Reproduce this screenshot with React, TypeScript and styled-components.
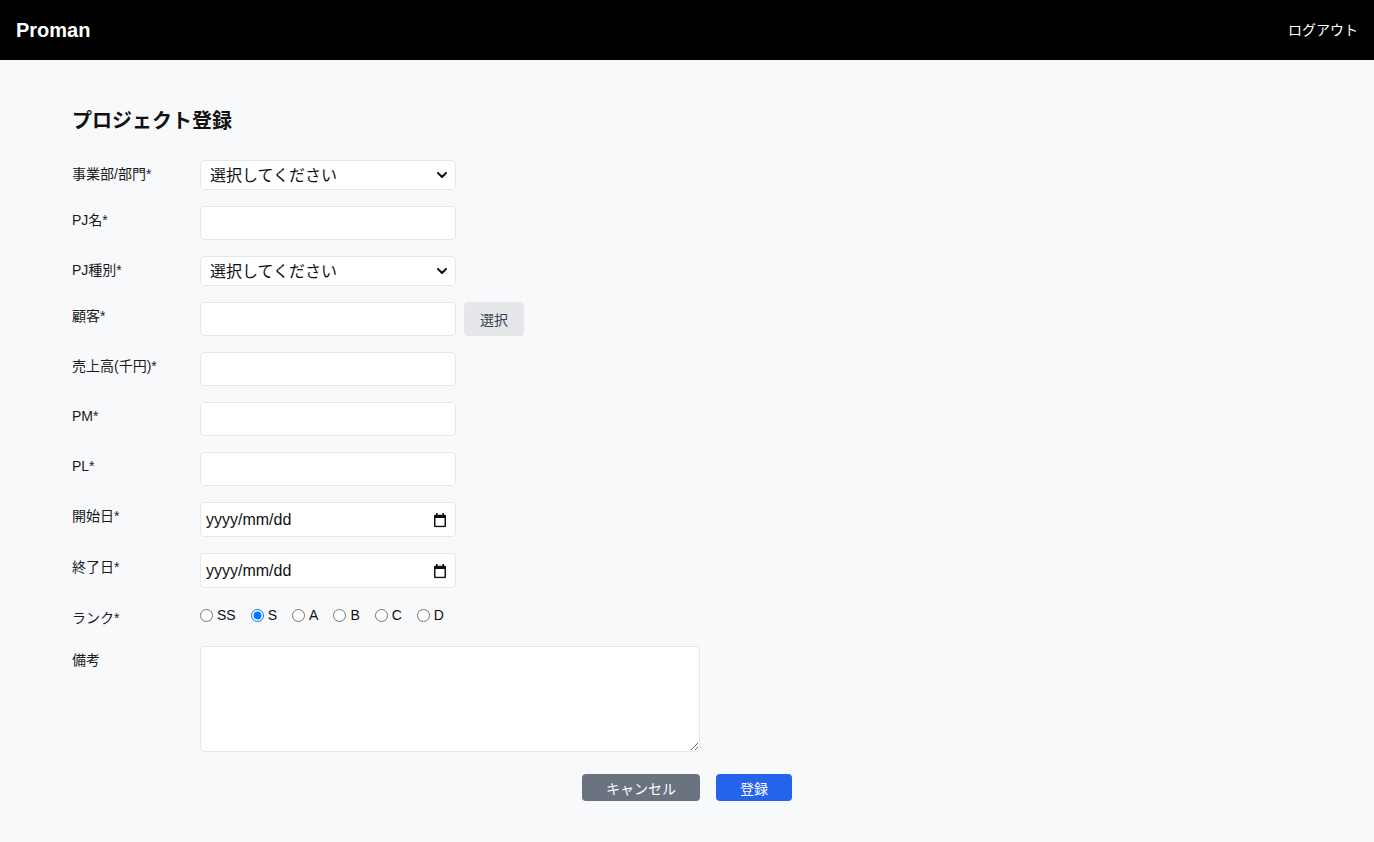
import React from 'react';
import styled, { createGlobalStyle } from 'styled-components';

const FONT = `"Liberation Sans", "Noto Sans CJK JP", sans-serif`;

const RANKS = ['SS', 'S', 'A', 'B', 'C', 'D'];

const GlobalStyle = createGlobalStyle`
  html, body {
    margin: 0;
    padding: 0;
    background: #f8f9fb;
    font-family: ${FONT};
    color: #111;
    overflow: hidden;
  }
  * {
    box-sizing: border-box;
  }
`;

const ChevronIcon = () => (
  <svg width="10" height="6" viewBox="0 0 10 6" fill="none">
    <path d="M1 1l4 4 4-4" stroke="#111" strokeWidth="2" strokeLinecap="round" strokeLinejoin="round" />
  </svg>
);

const CalendarIcon = () => (
  <svg width="14" height="15" viewBox="0 0 14 15" fill="none">
    <rect x="3" y="0.5" width="1.6" height="3" fill="#111" />
    <rect x="9.4" y="0.5" width="1.6" height="3" fill="#111" />
    <rect x="1" y="2.5" width="12" height="3" fill="#111" />
    <rect x="1.75" y="3" width="10.5" height="11" rx="0.5" stroke="#111" strokeWidth="1.5" />
  </svg>
);

const SelectField: React.FC = () => (
  <FieldWrap>
    <Select defaultValue="">
      <option value="">選択してください</option>
    </Select>
    <FieldIcon>
      <ChevronIcon />
    </FieldIcon>
  </FieldWrap>
);

const DateField: React.FC = () => (
  <FieldWrap>
    <DateInput type="text" placeholder="yyyy/mm/dd" />
    <FieldIcon>
      <CalendarIcon />
    </FieldIcon>
  </FieldWrap>
);

export default function App() {
  return (
    <Page>
      <GlobalStyle />
      <Header>
        <Brand>Proman</Brand>
        <Logout>ログアウト</Logout>
      </Header>

      <Main>
        <Title>プロジェクト登録</Title>

        <Row>
          <Label>事業部/部門*</Label>
          <SelectField />
        </Row>
        <Row>
          <Label>PJ名*</Label>
          <TextInput type="text" />
        </Row>
        <Row>
          <Label>PJ種別*</Label>
          <SelectField />
        </Row>
        <Row>
          <Label>顧客*</Label>
          <TextInput type="text" />
          <PickButton type="button">選択</PickButton>
        </Row>
        <Row>
          <Label>売上高(千円)*</Label>
          <TextInput type="text" />
        </Row>
        <Row>
          <Label>PM*</Label>
          <TextInput type="text" />
        </Row>
        <Row>
          <Label>PL*</Label>
          <TextInput type="text" />
        </Row>
        <Row>
          <Label>開始日*</Label>
          <DateField />
        </Row>
        <Row>
          <Label>終了日*</Label>
          <DateField />
        </Row>
        <Row>
          <Label>ランク*</Label>
          <RadioGroup>
            {RANKS.map(rank => (
              <RadioOption key={rank}>
                <Radio type="radio" name="rank" defaultChecked={rank === 'S'} />
                {rank}
              </RadioOption>
            ))}
          </RadioGroup>
        </Row>
        <Row>
          <Label>備考</Label>
          <TextArea />
        </Row>

        <Actions>
          <ActionButton type="button" $variant="cancel">キャンセル</ActionButton>
          <ActionButton type="button" $variant="primary">登録</ActionButton>
        </Actions>
      </Main>
    </Page>
  );
}

const Page = styled.div`
  height: 100vh;
  overflow-y: scroll;
  background: #f8f9fb;

  &::-webkit-scrollbar {
    width: 14px;
    background: #fafafa;
    border-left: 1px solid #e6e6e6;
  }
  &::-webkit-scrollbar-thumb {
    background: #c1c1c1;
    border-radius: 7px;
    border: 3px solid transparent;
    border-left-width: 4px;
    background-clip: padding-box;
  }
`;

const Header = styled.header`
  height: 60px;
  background: #000;
  color: #fff;
  display: flex;
  align-items: center;
  justify-content: space-between;
  padding: 0 16px;
`;

const Brand = styled.div`
  font-size: 20px;
  font-weight: bold;
  line-height: 24px;
`;

const Logout = styled.div`
  font-size: 14px;
  line-height: 20px;
  cursor: pointer;
`;

const Main = styled.main`
  padding: 48px 72px 222px;
`;

const Title = styled.h1`
  font-size: 20px;
  line-height: 26px;
  font-weight: bold;
  margin: 0 0 26px;
`;

const Row = styled.div`
  display: flex;
  align-items: flex-start;
  margin-bottom: 16px;
`;

const Label = styled.label`
  width: 128px;
  flex-shrink: 0;
  font-size: 14px;
  line-height: 20px;
  padding-top: 4px;
  color: #1a1a1a;
`;

const FieldWrap = styled.div`
  position: relative;
  width: 256px;
`;

const FieldIcon = styled.span`
  position: absolute;
  top: 50%;
  right: 9px;
  transform: translateY(-50%);
  display: flex;
  pointer-events: none;
`;

const Select = styled.select`
  appearance: none;
  width: 256px;
  height: 30px;
  padding: 0 30px 0 9px;
  border: 1px solid #e5e7eb;
  border-radius: 4px;
  background: #fff;
  font-family: ${FONT};
  font-size: 16px;
  color: #111;
  outline: none;
`;

const TextInput = styled.input`
  width: 256px;
  height: 34px;
  padding: 0 8px;
  border: 1px solid #e5e7eb;
  border-radius: 4px;
  background: #fff;
  font-family: ${FONT};
  font-size: 16px;
  outline: none;
`;

const DateInput = styled(TextInput)`
  height: 35px;
  padding: 0 30px 0 5px;

  &::placeholder {
    color: #111;
    opacity: 1;
  }
`;

const PickButton = styled.button`
  margin-left: 8px;
  height: 34px;
  padding: 0 16px;
  border: none;
  border-radius: 4px;
  background: #e5e7eb;
  color: #374151;
  font-family: ${FONT};
  font-size: 14px;
  cursor: pointer;
`;

const RadioGroup = styled.div`
  display: flex;
  align-items: center;
  height: 26px;
  padding-bottom: 4px;
`;

const RadioOption = styled.label`
  display: flex;
  align-items: center;
  margin-right: 15px;
  font-size: 14px;
  line-height: 20px;
`;

const Radio = styled.input`
  width: 13px;
  height: 13px;
  margin: 0 4px 0 0;
`;

const TextArea = styled.textarea`
  display: block;
  width: 500px;
  height: 106px;
  padding: 6px 8px;
  border: 1px solid #e5e7eb;
  border-radius: 4px;
  background: #fff;
  font-family: ${FONT};
  font-size: 14px;
  outline: none;
`;

const Actions = styled.div`
  display: flex;
  justify-content: center;
  gap: 16px;
  margin-top: 22px;
`;

const ActionButton = styled.button<{ $variant: 'cancel' | 'primary' }>`
  height: 27px;
  padding: 0 24px;
  border: none;
  border-radius: 4px;
  background: ${p => (p.$variant === 'primary' ? '#2563eb' : '#6b7280')};
  color: #fff;
  font-family: ${FONT};
  font-size: 14px;
  font-weight: 400;
  cursor: pointer;
`;
